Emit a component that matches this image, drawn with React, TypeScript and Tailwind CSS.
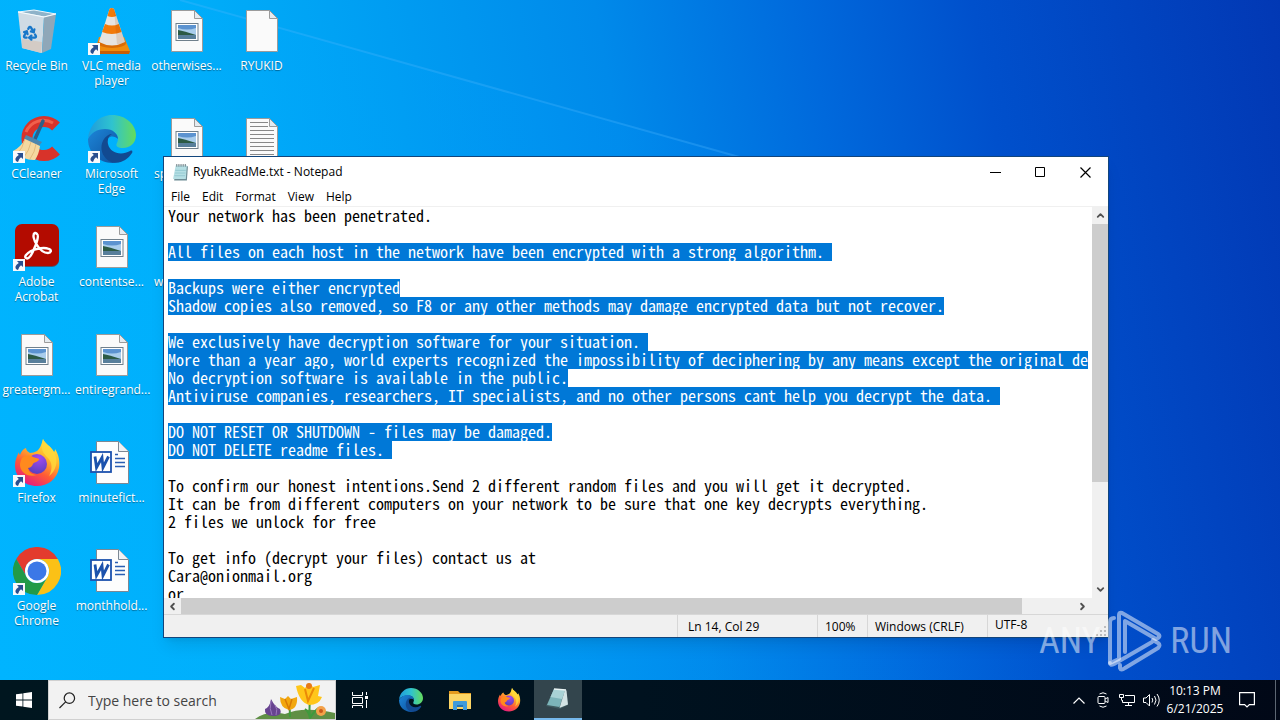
import { ReactNode, useId } from "react";
import { ChevronDown, ChevronLeft, ChevronRight, ChevronUp, Recycle } from "lucide-react";

interface IconProps {
  className?: string;
}

const RecycleBinIcon = () => (
  <svg viewBox="0 0 48 48" className="size-12">
    <path d="M5 5 21 3l22 4-12 3z" fill="#8fb3c9" stroke="#eef6fb" strokeWidth="1" />
    <path d="M5 5l26 5-2 36L9 41z" fill="#cfdbe4" />
    <path d="M31 10l12-3-5 35-9 4z" fill="#8fa7b8" />
    <path d="M9 32l20 3-1 11L9 41z" fill="#d3cbc5" />
    <path d="M5 5l26 5 12-3" fill="none" stroke="#f7fbfd" strokeWidth="1.2" />
    <Recycle x="9" y="18" width="16" height="16" color="#1777c9" strokeWidth={3.4} />
  </svg>
);

const VlcIcon = () => (
  <svg viewBox="0 0 48 48" className="size-12">
    <path d="M11 30h25l6 14-1 3H12l-5-3z" fill="#f08c0c" />
    <path d="M7 44h35l-1 3H12z" fill="#c85f04" />
    <ellipse cx="24" cy="36" rx="14" ry="5" fill="#d96c06" />
    <path d="M21.500 2q2-2 4.500 0L37 35q-13 7-26 0z" fill="#e6e4e0" />
    <path d="M21.500 2q2-2 4.500 0l2.200 7q-4 2-8.800 0zM17 17q7 3 13.800 0l2.800 8q-10 4-19.500 0z" fill="#f27a09" />
    <path d="M26 2l11 33q-4 2-8 2.500z" fill="#a04400" opacity=".15" />
  </svg>
);

const CCleanerIcon = () => (
  <svg viewBox="0 0 48 48" className="size-12">
    <path d="M43 11.500A17 17 0 1 0 43 35.500" fill="none" stroke="#d8332a" strokeWidth="11" />
    <path d="M40 8A19 19 0 0 0 13 17" fill="none" stroke="#f0604c" strokeWidth="3" />
    <path d="M30 6 22 24" stroke="#2d5f87" strokeWidth="3.500" strokeLinecap="round" />
    <path d="M13 20l16 7-3 4-15-7z" fill="#4d86ad" />
    <path d="M12 24l15 7q-1 8-5 14-10 1-22-9 8-4 12-12z" fill="#f5d8a0" />
    <path d="M12 24q-3 10-7 14M18 27q-2 9-7 15M23 29q-1 8-6 15" stroke="#e3bb7c" fill="none" />
  </svg>
);

const EdgeIcon = ({ className = "size-12" }: IconProps) => {
  const id = useId();
  return (
    <svg viewBox="0 0 48 48" className={className}>
      <defs>
        <linearGradient id={id + "a"} x1="0" y1=".5" x2="1" y2=".5">
          <stop offset="0" stopColor="#1f9bdc" />
          <stop offset=".5" stopColor="#2fc3cf" />
          <stop offset="1" stopColor="#64dc5c" />
        </linearGradient>
        <linearGradient id={id + "b"} x1="0" y1="0" x2="1" y2="1">
          <stop offset="0" stopColor="#1d86d8" />
          <stop offset="1" stopColor="#0d4f9c" />
        </linearGradient>
      </defs>
      <path d="M0 23C2 9 12 0 24 0c14 0 24 10 24 20 0 8-6 13-13 13-5 0-8-2-6-5 3-6-1-13-10-13C10 15 3 18 0 23z" fill={`url(#${id}a)`} />
      <path d="M0 24c3-6 9-10 17-10 8 0 13 5 13 10-2-2-5-3-8-2-6 2-8 9-5 15s9 9 14 10C16 51 0 41 0 24z" fill={`url(#${id}b)`} />
      <path d="M16 24c-4 6-4 16 5 22 9 4 18 0 23-8 1-2 0-3-2-2-9 5-20 2-22-7-1-5 1-8 4-10-3 0-6 2-8 5z" fill="#124a91" />
    </svg>
  );
};

const AcrobatIcon = () => (
  <svg viewBox="0 0 48 48" className="size-12">
    <rect x="2" y="2" width="44" height="42" rx="7" fill="#7a1712" opacity=".6" />
    <rect x="2" y="1" width="44" height="42" rx="7" fill="#b30b00" />
    <path
      d="M22 10c-3 1-1 8 2 12 3 5 7 8 11 8 3 0 4-3 1-4-5-2-13 0-18 2-5 3-7 6-5 7 3 2 6-4 8-9 3-6 5-14 3-15-.5-.8-1.400-1.200-2-1z"
      fill="none"
      stroke="#fff"
      strokeWidth="2.400"
      strokeLinejoin="round"
    />
  </svg>
);

const FirefoxIcon = ({ className = "size-12" }: IconProps) => {
  const id = useId();
  return (
    <svg viewBox="0 0 48 48" className={className}>
      <defs>
        <linearGradient id={id + "a"} x1=".8" y1="0" x2=".25" y2="1">
          <stop offset="0" stopColor="#fff04a" />
          <stop offset=".35" stopColor="#ffb52a" />
          <stop offset=".65" stopColor="#ff5a36" />
          <stop offset="1" stopColor="#e31587" />
        </linearGradient>
        <radialGradient id={id + "b"} cx=".6" cy=".2" r=".9">
          <stop offset="0" stopColor="#a34af0" />
          <stop offset="1" stopColor="#4f3fb8" />
        </radialGradient>
      </defs>
      <path d="M30 0c2 5 8 7 11 13 1-1 1-2 1-3 4 6 5 13 4 19-2 11-11 18-22 18C11 47 2 38 2 26c0-5 2-9 4-13 0 1 0 2 1 3 1-3 3-6 6-7 0 2 2 4 4 5 2 0 5-1 7-2 3-2 5-8 6-12z" fill={`url(#${id}a)`} />
      <circle cx="24" cy="25" r="10" fill={`url(#${id}b)`} />
      <path d="M9 19c4-3 8-3 11-1 2 1 5 1 6 2 0 3-5 3-6 5-1 3-4 4-5 4 1 5 5 7 9 7-9 3-17-3-17-10 0-3 1-5 2-7z" fill="#ff8a1e" />
      <path d="M30 0c2 5 8 7 11 13 5 9 2 19-5 24 4-7 3-14-1-18-5-5-8-9-5-19z" fill="#ffd93b" opacity=".8" />
    </svg>
  );
};

const ChromeIcon = () => (
  <svg viewBox="0 0 48 48" className="size-12">
    <path d="M3.200 12A24 24 0 0 1 44.800 12H24a12 12 0 0 0-10.400 18z" fill="#e33b2e" />
    <path d="M44.800 12A24 24 0 0 1 24 48l10.400-18A12 12 0 0 0 24 12z" fill="#fbc116" />
    <path d="M24 48A24 24 0 0 1 3.200 12l10.400 18a12 12 0 0 0 20.800 0z" fill="#229a48" />
    <circle cx="24" cy="24" r="12" fill="#fff" />
    <circle cx="24" cy="24" r="9.500" fill="#3b78e7" />
  </svg>
);

const Page = ({ children }: { children?: ReactNode }) => (
  <svg viewBox="0 0 48 48" className="size-12">
    <path d="M8.500 3.500h23l8 8v33h-31z" fill="#fafafa" stroke="#9b9b9b" strokeWidth="1" />
    <path d="M31.500 3.500v8h8z" fill="#e4ebf0" stroke="#9b9b9b" strokeWidth="1" />
    {children}
  </svg>
);

const PictureFileIcon = () => (
  <Page>
    <rect x="13" y="16.500" width="22" height="17" fill="#fff" stroke="#70808c" />
    <rect x="15" y="18" width="18" height="14" fill="#a9cdec" />
    <path d="M15 18h18v3q-9 3-18 0z" fill="#5c93d0" />
    <path d="M15 23q6 1 18 5v1H15z" fill="#2c5a45" />
    <path d="M15 28h18v4H15z" fill="#587f9b" />
  </Page>
);

const TextFileIcon = () => (
  <Page>
    <path d="M12 7.500h18M12 11.500h18M12 15.500h24M12 19.500h24M12 23.500h24M12 27.500h24M12 31.500h24M12 35.500h24M12 39.500h24" stroke="#888" />
  </Page>
);

const WordFileIcon = () => (
  <svg viewBox="0 0 48 48" className="size-12">
    <path d="M8.500 2.500h22l10 10v32h-32z" fill="#fdfdfd" stroke="#7c8894" />
    <path d="M30.500 2.500v10h10" fill="#eef2f6" stroke="#7c8894" />
    <path d="M27 19.500h10M27 23.500h10M27 27.500h10M27 15.500h3" stroke="#2b5fb4" strokeWidth="1.400" />
    <rect x="3" y="13" width="20" height="20" fill="#fff" stroke="#1c52ad" strokeWidth="1.800" />
    <path d="M7 17.500l1.500 11L14 18.500l1 10 5.500-11" fill="none" stroke="#1c52ad" strokeWidth="2.800" />
  </svg>
);

const NotepadIcon = ({ className }: IconProps) => (
  <svg viewBox="0 0 16 16" className={className}>
    <path d="M4 2h11l-1 13.500H2z" fill="#6d8b94" />
    <path d="M3.500 1.500h10.500l-1 12.500H1z" fill="#b5dfe4" />
    <path d="M3 6h10M2.700 8.500h10M2.300 11h10" stroke="#83bdc6" strokeWidth=".6" />
    <path d="M4.500 0v2.500M6.500 0v2.500M8.500 0v2.500M10.500 0v2.500M12.500 0v2.500" stroke="#54646b" strokeWidth=".8" />
  </svg>
);

const NotepadLargeIcon = () => (
  <svg viewBox="0 0 24 24" className="size-6">
    <path d="M8 2l11 1 3 15-8 4-14-3z" fill="#3f5b60" />
    <path d="M8 2l11 1-5.500 17L1 18z" fill="#7cb4b9" />
    <path d="M8 2l11 1-3 9-11.500-2z" fill="#a9d2d5" />
    <path d="M19 3l1.500.5L22 17.500l-8.500 3.500z" fill="#d3e3e4" />
    <path d="M8 2l12 1" stroke="#e9f3f3" strokeWidth="1.500" />
  </svg>
);

const FolderIcon = () => (
  <svg viewBox="0 0 24 24" className="size-6">
    <path d="M1 3h9l2 2h11v16H1z" fill="#e59b1e" />
    <path d="M1 6h22v15H1z" fill="#fcd565" />
    <path d="M5 22v-8q0-1 1-1h12q1 0 1 1v8h-4v-4H9v4z" fill="#3f9bdb" />
    <path d="M9 17h6v2H9z" fill="#2374b5" />
  </svg>
);

const CrocusArt = () => (
  <svg viewBox="0 0 80 38" className="h-[38px] w-20 shrink-0" aria-hidden="true">
    <path d="M0 38q12-9 30-5 18-8 50-1v6z" fill="#5f8f45" />
    <path d="M35 36q0-8-1-14M55 36q-1-8 0-16M50 28q4 3 5 9 5-8 9-10" stroke="#3f9a3c" strokeWidth="2" fill="none" />
    <path d="M16 18q4 8 9 10 3 7-7 7-9 0-8-7 5-2 6-10z" fill="#674390" />
    <path d="M16 20q-2 8 1 14M20 24q3 4 1 10" stroke="#9a77bd" fill="none" />
    <path d="M25 16l5 2 3-3 3 3 6-2q1 12-8 13-9-2-9-13z" fill="#f2a70f" />
    <path d="M30 18l4 10 3-10" fill="none" stroke="#d97a06" strokeWidth="1.500" />
    <path d="M41 5l5-1 4 3 4-5 4 4 7-2-2 11 4 1q-3 8-13 8-10-3-13-19z" fill="#ffc61a" />
    <path d="M50 8l3 12 6-13" fill="none" stroke="#ea8a08" strokeWidth="2" />
    <circle cx="54" cy="5" r="3" fill="#e87b17" />
    <circle cx="66" cy="30" r="5" fill="#f3a24a" />
    <circle cx="66" cy="30" r="2" fill="#c9591a" />
  </svg>
);

interface DesktopItem {
  label: string;
  icon: ReactNode;
  shortcut?: boolean;
  clipped?: boolean;
}

const columns: DesktopItem[][] = [
  [
    { label: "Recycle Bin", icon: <RecycleBinIcon /> },
    { label: "CCleaner", icon: <CCleanerIcon />, shortcut: true },
    { label: "Adobe Acrobat", icon: <AcrobatIcon />, shortcut: true },
    { label: "greatergm...", icon: <PictureFileIcon /> },
    { label: "Firefox", icon: <FirefoxIcon />, shortcut: true },
    { label: "Google Chrome", icon: <ChromeIcon />, shortcut: true },
  ],
  [
    { label: "VLC media player", icon: <VlcIcon />, shortcut: true },
    { label: "Microsoft Edge", icon: <EdgeIcon />, shortcut: true },
    { label: "contentse...", icon: <PictureFileIcon /> },
    { label: "entiregrand...", icon: <PictureFileIcon /> },
    { label: "minutefict...", icon: <WordFileIcon /> },
    { label: "monthhold...", icon: <WordFileIcon /> },
  ],
  [
    { label: "otherwises...", icon: <PictureFileIcon /> },
    { label: "sp", icon: <PictureFileIcon />, clipped: true },
    { label: "w", icon: <PictureFileIcon />, clipped: true },
  ],
  [
    { label: "RYUKID", icon: <Page /> },
    { label: "", icon: <TextFileIcon /> },
  ],
];

const ShortcutBadge = () => (
  <svg viewBox="0 0 12 12" className="absolute bottom-0 left-0 size-3">
    <rect width="12" height="12" fill="#f7f9fb" />
    <path d="M4 2h6v6L8 6.200Q5.500 8 5 11 2 10 2.500 7.500 3 5.500 5.800 4z" fill="#2a4f8f" />
  </svg>
);

const DesktopIcon = ({ item }: { item: DesktopItem }) => (
  <button type="button" className="flex h-[108px] w-[75px] flex-col items-center gap-[3px] pr-0.5 pt-[7px]">
    <span className="relative block size-12">
      {item.icon}
      {item.shortcut && <ShortcutBadge />}
    </span>
    <span
      className={`w-full text-xs leading-[15px] text-white [text-shadow:0_1px_1px_rgba(0,0,0,0.4)] ${
        item.clipped ? "pl-1 text-left" : "text-center"
      }`}
    >
      {item.label}
    </span>
  </button>
);

const lines: { text: string; selected?: boolean }[] = [
  { text: "Your network has been penetrated." },
  { text: "" },
  { text: "All files on each host in the network have been encrypted with a strong algorithm. ", selected: true },
  { text: "" },
  { text: "Backups were either encrypted", selected: true },
  { text: "Shadow copies also removed, so F8 or any other methods may damage encrypted data but not recover.", selected: true },
  { text: "" },
  { text: "We exclusively have decryption software for your situation. ", selected: true },
  { text: "More than a year ago, world experts recognized the impossibility of deciphering by any means except the original de", selected: true },
  { text: "No decryption software is available in the public.", selected: true },
  { text: "Antiviruse companies, researchers, IT specialists, and no other persons cant help you decrypt the data. ", selected: true },
  { text: "" },
  { text: "DO NOT RESET OR SHUTDOWN - files may be damaged.", selected: true },
  { text: "DO NOT DELETE readme files. ", selected: true },
  { text: "" },
  { text: "To confirm our honest intentions.Send 2 different random files and you will get it decrypted." },
  { text: "It can be from different computers on your network to be sure that one key decrypts everything." },
  { text: "2 files we unlock for free" },
  { text: "" },
  { text: "To get info (decrypt your files) contact us at" },
  { text: "Cara@onionmail.org" },
  { text: "or" },
];

const NotepadWindow = () => (
  <section
    aria-label="RyukReadMe.txt - Notepad"
    className="absolute left-[163px] top-[156px] flex h-[482px] w-[946px] flex-col border border-[#12457c] bg-white text-xs text-black shadow-lg"
  >
    <header className="flex h-[30px] shrink-0 items-center pl-2">
      <NotepadIcon className="mr-1 size-[17px]" />
      <h1 className="flex-1">RyukReadMe.txt - Notepad</h1>
      <button type="button" aria-label="Minimize" className="grid h-full w-[45px] place-items-center">
        <svg viewBox="0 0 11 11" className="size-[11px]">
          <path d="M0 5.500h11" stroke="#000" />
        </svg>
      </button>
      <button type="button" aria-label="Maximize" className="grid h-full w-[45px] place-items-center">
        <svg viewBox="0 0 11 11" className="size-[11px]">
          <path d="M.5.5h9v9h-9z" fill="none" stroke="#000" />
        </svg>
      </button>
      <button type="button" aria-label="Close" className="grid h-full w-[45px] place-items-center">
        <svg viewBox="0 0 11 11" className="size-[11px]">
          <path d="M.5.5l10 10M10.500.5l-10 10" stroke="#000" strokeWidth="1.200" />
        </svg>
      </button>
    </header>

    <nav className="flex h-5 shrink-0 items-center border-b border-[#f0f0f0] pl-px">
      {["File", "Edit", "Format", "View", "Help"].map((name) => (
        <button key={name} type="button" className="px-1.5">
          {name}
        </button>
      ))}
    </nav>

    <div className="flex min-h-0 flex-1">
      <div
        role="textbox"
        aria-multiline="true"
        aria-label="Text editor"
        className="mr-1 min-w-0 flex-1 overflow-hidden whitespace-pre pl-1 font-['Noto_Sans_Mono_CJK_SC','Liberation_Mono',monospace] text-base leading-4"
      >
        {lines.map((line, i) => (
          <div key={i} className="h-[18px]">
            <span className={line.selected ? "inline-block h-[18px] bg-[#0078d7] text-white" : ""}>{line.text}</span>
          </div>
        ))}
      </div>
      <div className="flex w-4 flex-col bg-[#f0f0f0] text-[#505050]">
        <button type="button" aria-label="Scroll up" className="grid h-[17px] place-items-center">
          <ChevronUp size={11} strokeWidth={4} />
        </button>
        <div className="h-[258px] bg-[#cdcdcd]" />
        <button type="button" aria-label="Scroll down" className="mt-auto grid h-[17px] place-items-center">
          <ChevronDown size={11} strokeWidth={4} />
        </button>
      </div>
    </div>

    <div className="flex h-4 shrink-0 bg-[#f0f0f0] pr-[17px] text-[#505050]">
      <button type="button" aria-label="Scroll left" className="grid w-[17px] place-items-center">
        <ChevronLeft size={11} strokeWidth={4} />
      </button>
      <div className="w-[841px] bg-[#cdcdcd]" />
      <button type="button" aria-label="Scroll right" className="ml-auto grid w-[17px] place-items-center">
        <ChevronRight size={11} strokeWidth={4} />
      </button>
    </div>

    <footer className="flex h-[23px] shrink-0 border-t border-[#d7d7d7] bg-[#f0f0f0] leading-6">
      <div className="flex-1" />
      <div className="w-[140px] border-l border-[#d7d7d7] pl-2.5">Ln 14, Col 29</div>
      <div className="w-[50px] border-l border-[#d7d7d7] pl-[7px]">100%</div>
      <div className="w-[120px] border-l border-[#d7d7d7] pl-[7px]">Windows (CRLF)</div>
      <div className="flex w-[121px] items-end justify-between border-l border-[#d7d7d7] pl-[7px]">
        UTF-8
        <svg viewBox="0 0 12 12" className="size-3">
          <path d="M8 1h2v2H8zM8 5h2v2H8zM8 9h2v2H8zM4 5h2v2H4zM4 9h2v2H4zM0 9h2v2H0z" fill="#bdbdbd" />
        </svg>
      </div>
    </footer>
  </section>
);

const Watermark = () => (
  <div className="pointer-events-none absolute bottom-2 right-12 flex items-center gap-2 font-['Roboto_Condensed','Liberation_Sans_Narrow','Liberation_Sans',sans-serif] text-4xl leading-[62px] text-white/50">
    <span>ANY</span>
    <svg viewBox="0 0 54 62" className="h-[62px] w-[54px]" fill="none" stroke="#fff" strokeOpacity=".5" strokeWidth="4" strokeLinejoin="round" strokeLinecap="round">
      <path d="M6 8Q2 8 2 12v41l9-4V5q0-3 3-2l36 21q3 2 0 4l-2 1-31-18v31" />
      <path d="M2 53q0 3 4 1l38-22M12 55v3q1 3 5 0l33-20q3-3 0-5l-5-3" />
    </svg>
    <span>RUN</span>
  </div>
);

const taskbarApps: { name: string; icon: ReactNode; active?: boolean }[] = [
  { name: "Microsoft Edge", icon: <EdgeIcon className="size-6" /> },
  { name: "File Explorer", icon: <FolderIcon /> },
  { name: "Firefox", icon: <FirefoxIcon className="size-6" /> },
  { name: "Notepad", icon: <NotepadLargeIcon />, active: true },
];

const Taskbar = () => (
  <footer className="flex h-10 shrink-0 bg-[linear-gradient(90deg,#00161f,#00121f_50%,#010817)] text-white">
    <button type="button" aria-label="Start" className="grid w-12 place-items-center">
      <svg viewBox="0 0 16 16" className="size-4" fill="#fff">
        <path d="M0 2.300l6.500-.9v6.200H0zM7.300 1.300 16 0v7.600H7.300zM0 8.400h6.500v6.200L0 13.700zM7.300 8.400H16V16l-8.700-1.300z" />
      </svg>
    </button>
    <label className="flex w-72 items-center overflow-hidden border border-[#d0d0d0] bg-[#f2f2f2]">
      <svg viewBox="0 0 18 18" className="ml-2.5 mr-3 size-[17px] shrink-0" fill="none" stroke="#222" strokeWidth="1.300">
        <circle cx="11" cy="6.500" r="5.500" />
        <path d="M7 10.500.5 17" />
      </svg>
      <input
        type="text"
        aria-label="Type here to search"
        placeholder="Type here to search"
        className="min-w-0 flex-1 bg-transparent pt-0.5 text-sm text-black outline-none placeholder:text-[#444]"
      />
      <CrocusArt />
    </label>
    <button type="button" aria-label="Task View" className="grid w-12 place-items-center">
      <svg viewBox="0 0 18 16" className="h-4 w-[18px]" fill="none" stroke="#fff">
        <path d="M1.500 0v3.500h10V0M1.500 5.500h10v6h-10zM1.500 16v-2.500h10V16M15.500 0v3M15.500 8v8" />
        <path d="M14 4h3v3h-3z" fill="#fff" stroke="none" />
      </svg>
    </button>
    <div className="ml-[3px] flex gap-px">
      {taskbarApps.map((app) => (
        <button
          key={app.name}
          type="button"
          aria-label={app.name}
          className={`grid w-12 place-items-center ${app.active ? "border-b-2 border-[#76b9ed] bg-[#33454d]" : ""}`}
        >
          {app.icon}
        </button>
      ))}
    </div>

    <div className="ml-auto flex items-center">
      <button type="button" aria-label="Show hidden icons" className="grid w-6 place-items-center">
        <svg viewBox="0 0 12 7" className="h-[7px] w-3" fill="none" stroke="#fff" strokeWidth="1.200">
          <path d="M.5 6.500 6 1l5.500 5.500" />
        </svg>
      </button>
      <button type="button" aria-label="Meet Now" className="grid w-6 place-items-center">
        <svg viewBox="0 0 12 16" className="h-4 w-3" fill="none" stroke="#fff">
          <rect x="1" y="4.500" width="7" height="7" rx="1" />
          <path d="M8 7l3-1.500v5L8 9M2.500 2Q6-.5 9.500 2M2.500 14q3.500 2.500 7 0" />
        </svg>
      </button>
      <button type="button" aria-label="Network" className="grid w-6 place-items-center">
        <svg viewBox="0 0 16 14" className="h-3.5 w-4" fill="none" stroke="#fff">
          <path d="M6 2.500h9.500v7H3.500V7M9.500 9.500v3M6 12.500h7M.5 1.500h4v3h-4zM2.500 4.500v3" />
        </svg>
      </button>
      <button type="button" aria-label="Volume" className="grid w-6 place-items-center">
        <svg viewBox="0 0 17 14" className="h-3.5 w-[17px]" fill="none" stroke="#fff">
          <path d="M.5 5v4.500h2.500L6.500 13V1.500L3 5zM9 5q1.500 2 0 4.500M11.500 3q3 4 0 8.500M14 1q4.500 6 0 12.500" />
        </svg>
      </button>
      <button type="button" className="w-16 text-center text-xs leading-[18px]">
        10:13 PM
        <br />
        6/21/2025
      </button>
      <button type="button" aria-label="Notifications" className="grid w-10 place-items-center">
        <svg viewBox="0 0 16 16" className="size-4" fill="none" stroke="#fff" strokeWidth="1.200">
          <path d="M.6.600h14.800v12h-5L8 15l-2.400-2.400h-5z" />
        </svg>
      </button>
      <button type="button" aria-label="Show desktop" className="ml-2 h-10 w-[5px] border-l border-[#5c6672]" />
    </div>
  </footer>
);

const App = () => {
  return (
    <div className="flex h-screen flex-col overflow-hidden font-['Open_Sans','Noto_Sans',sans-serif]">
      <main className="relative flex min-h-0 flex-1 overflow-hidden bg-[linear-gradient(80deg,#00b4ff_0%,#00b0fa_20%,#00a2f4_32%,#008aea_51%,#0069dc_66%,#0050cc_78%,#0238b4_100%)]">
        {/* Light beam of the wallpaper */}
        <svg viewBox="0 0 1280 680" preserveAspectRatio="none" className="absolute inset-0 size-full" aria-hidden="true">
          <defs>
            <linearGradient id="beam" x1="0" y1="0" x2="1" y2="0">
              <stop offset="0" stopColor="#00b4ff" stopOpacity=".25" />
              <stop offset=".5" stopColor="#0098ff" stopOpacity=".15" />
              <stop offset=".85" stopColor="#0060f0" stopOpacity="0" />
            </linearGradient>
          </defs>
          <path d="M180 0 750 160 1280 309V680H0V0z" fill="url(#beam)" />
          <path d="M180 0 750 160" stroke="#4fb8ff" strokeWidth="2" opacity=".3" />
        </svg>
        <div className="relative flex">
          {columns.map((items, i) => (
            <div key={i} className="flex flex-col">
              {items.map((item) => (
                <DesktopIcon key={item.label} item={item} />
              ))}
            </div>
          ))}
        </div>
        <NotepadWindow />
        <Watermark />
      </main>
      <Taskbar />
    </div>
  );
};

export default App;
